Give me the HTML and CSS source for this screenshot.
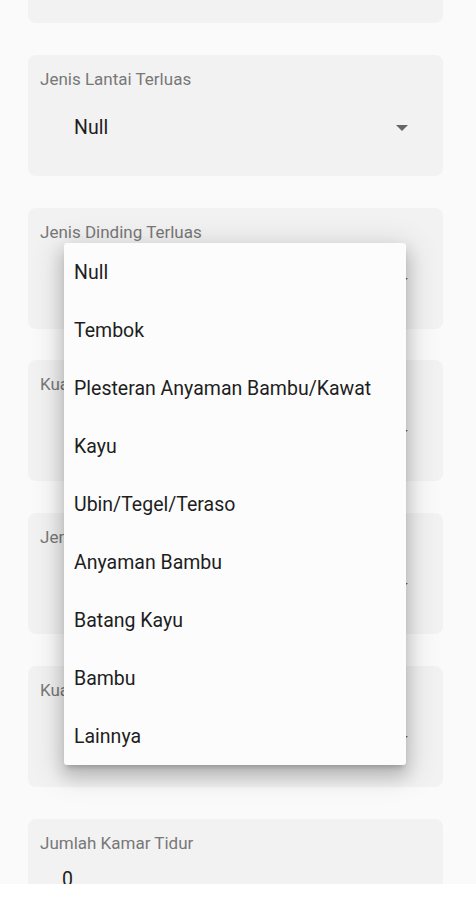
FILE: index.html
```html
<!DOCTYPE html>
<html lang="id">
<head>
  <meta charset="UTF-8">
  <title>Data Rumah</title>
  <link rel="stylesheet" href="styles.css">
</head>
<body>
  <div class="screen">
    <div class="scroll">
      <div class="form">
        <div class="field">
          <div class="field-label">Kondisi Lantai</div>
          <div class="select"><span>Null</span><span class="arrow"></span></div>
        </div>
        <div class="field">
          <div class="field-label">Jenis Lantai Terluas</div>
          <div class="select"><span>Null</span><span class="arrow"></span></div>
        </div>
        <div class="field">
          <div class="field-label">Jenis Dinding Terluas</div>
          <div class="select"><span>Null</span><span class="arrow"></span></div>
        </div>
        <div class="field">
          <div class="field-label">Kualitas Dinding Terluas</div>
          <div class="select"><span>Null</span><span class="arrow"></span></div>
        </div>
        <div class="field">
          <div class="field-label">Jenis Atap Terluas</div>
          <div class="select"><span>Null</span><span class="arrow"></span></div>
        </div>
        <div class="field">
          <div class="field-label">Kualitas Atap Terluas</div>
          <div class="select"><span>Null</span><span class="arrow"></span></div>
        </div>
        <div class="field">
          <div class="field-label">Jumlah Kamar Tidur</div>
          <div class="input">0</div>
        </div>
      </div>

      <!-- menu terbuka untuk Jenis Dinding Terluas -->
      <ul class="menu">
        <li>Null</li>
        <li>Tembok</li>
        <li>Plesteran Anyaman Bambu/Kawat</li>
        <li>Kayu</li>
        <li>Ubin/Tegel/Teraso</li>
        <li>Anyaman Bambu</li>
        <li>Batang Kayu</li>
        <li>Bambu</li>
        <li>Lainnya</li>
      </ul>
    </div>
    <div class="bottom-bar"></div>
  </div>
</body>
</html>
```

FILE: styles.css
```css
html,body{
  margin: 0;
  padding: 0;
}
body{
  background: #fafafa;
  font-family: Roboto, "Noto Sans", sans-serif;
}
.screen{
  width: 476px;
  height: 900px;
  display: flex;
  flex-direction: column;
}
.scroll{
  height: 884px;
  overflow: hidden;
  position: relative;   /*untuk menu dropdown*/
}
.form{
  display: flex;
  flex-direction: column;
  gap: 31.8px;
  margin-top: -98px;    /*kartu pertama terpotong di atas*/
  padding-left: 28px;
}
.field{
  width: 415px;
  height: 121px;
  box-sizing: border-box;
  background: #f2f2f2;
  border-radius: 8px;
  padding: 14px 0 0 12px;
  flex-shrink: 0;
}
.field-label{
  font-size: 17px;
  line-height: 20px;
  color: #787878;
}
.select{
  display: flex;
  align-items: center;
  justify-content: space-between;
  margin: 18px 35px 0 34px;
  height: 42px;
  font-size: 19.5px;
  color: #1e1e1e;
}
.arrow{
  width: 0;
  height: 0;
  border-left: 6px solid transparent;
  border-right: 6px solid transparent;
  border-top: 6px solid #666;
}
.input{
  margin: 15px 0 0 22px;
  font-size: 19.5px;
  line-height: 24px;
  color: #1e1e1e;
}
.menu{
  list-style: none;
  margin: 0;
  padding: 0;
  position: absolute;
  top: 243px;
  left: 64px;
  width: 342px;
  background: #fcfcfc;
  border-radius: 3px;
  box-shadow: 0 5px 5px -3px rgba(0,0,0,.2), 0 10px 16px 2px rgba(0,0,0,.16), 0 6px 30px 6px rgba(0,0,0,.12);
}
.menu li{
  height: 58px;
  display: flex;
  align-items: center;
  padding-left: 10px;
  font-size: 19.5px;
  color: #1e1e1e;
}
.bottom-bar{
  height: 16px;
  background: #fff;
}
```
